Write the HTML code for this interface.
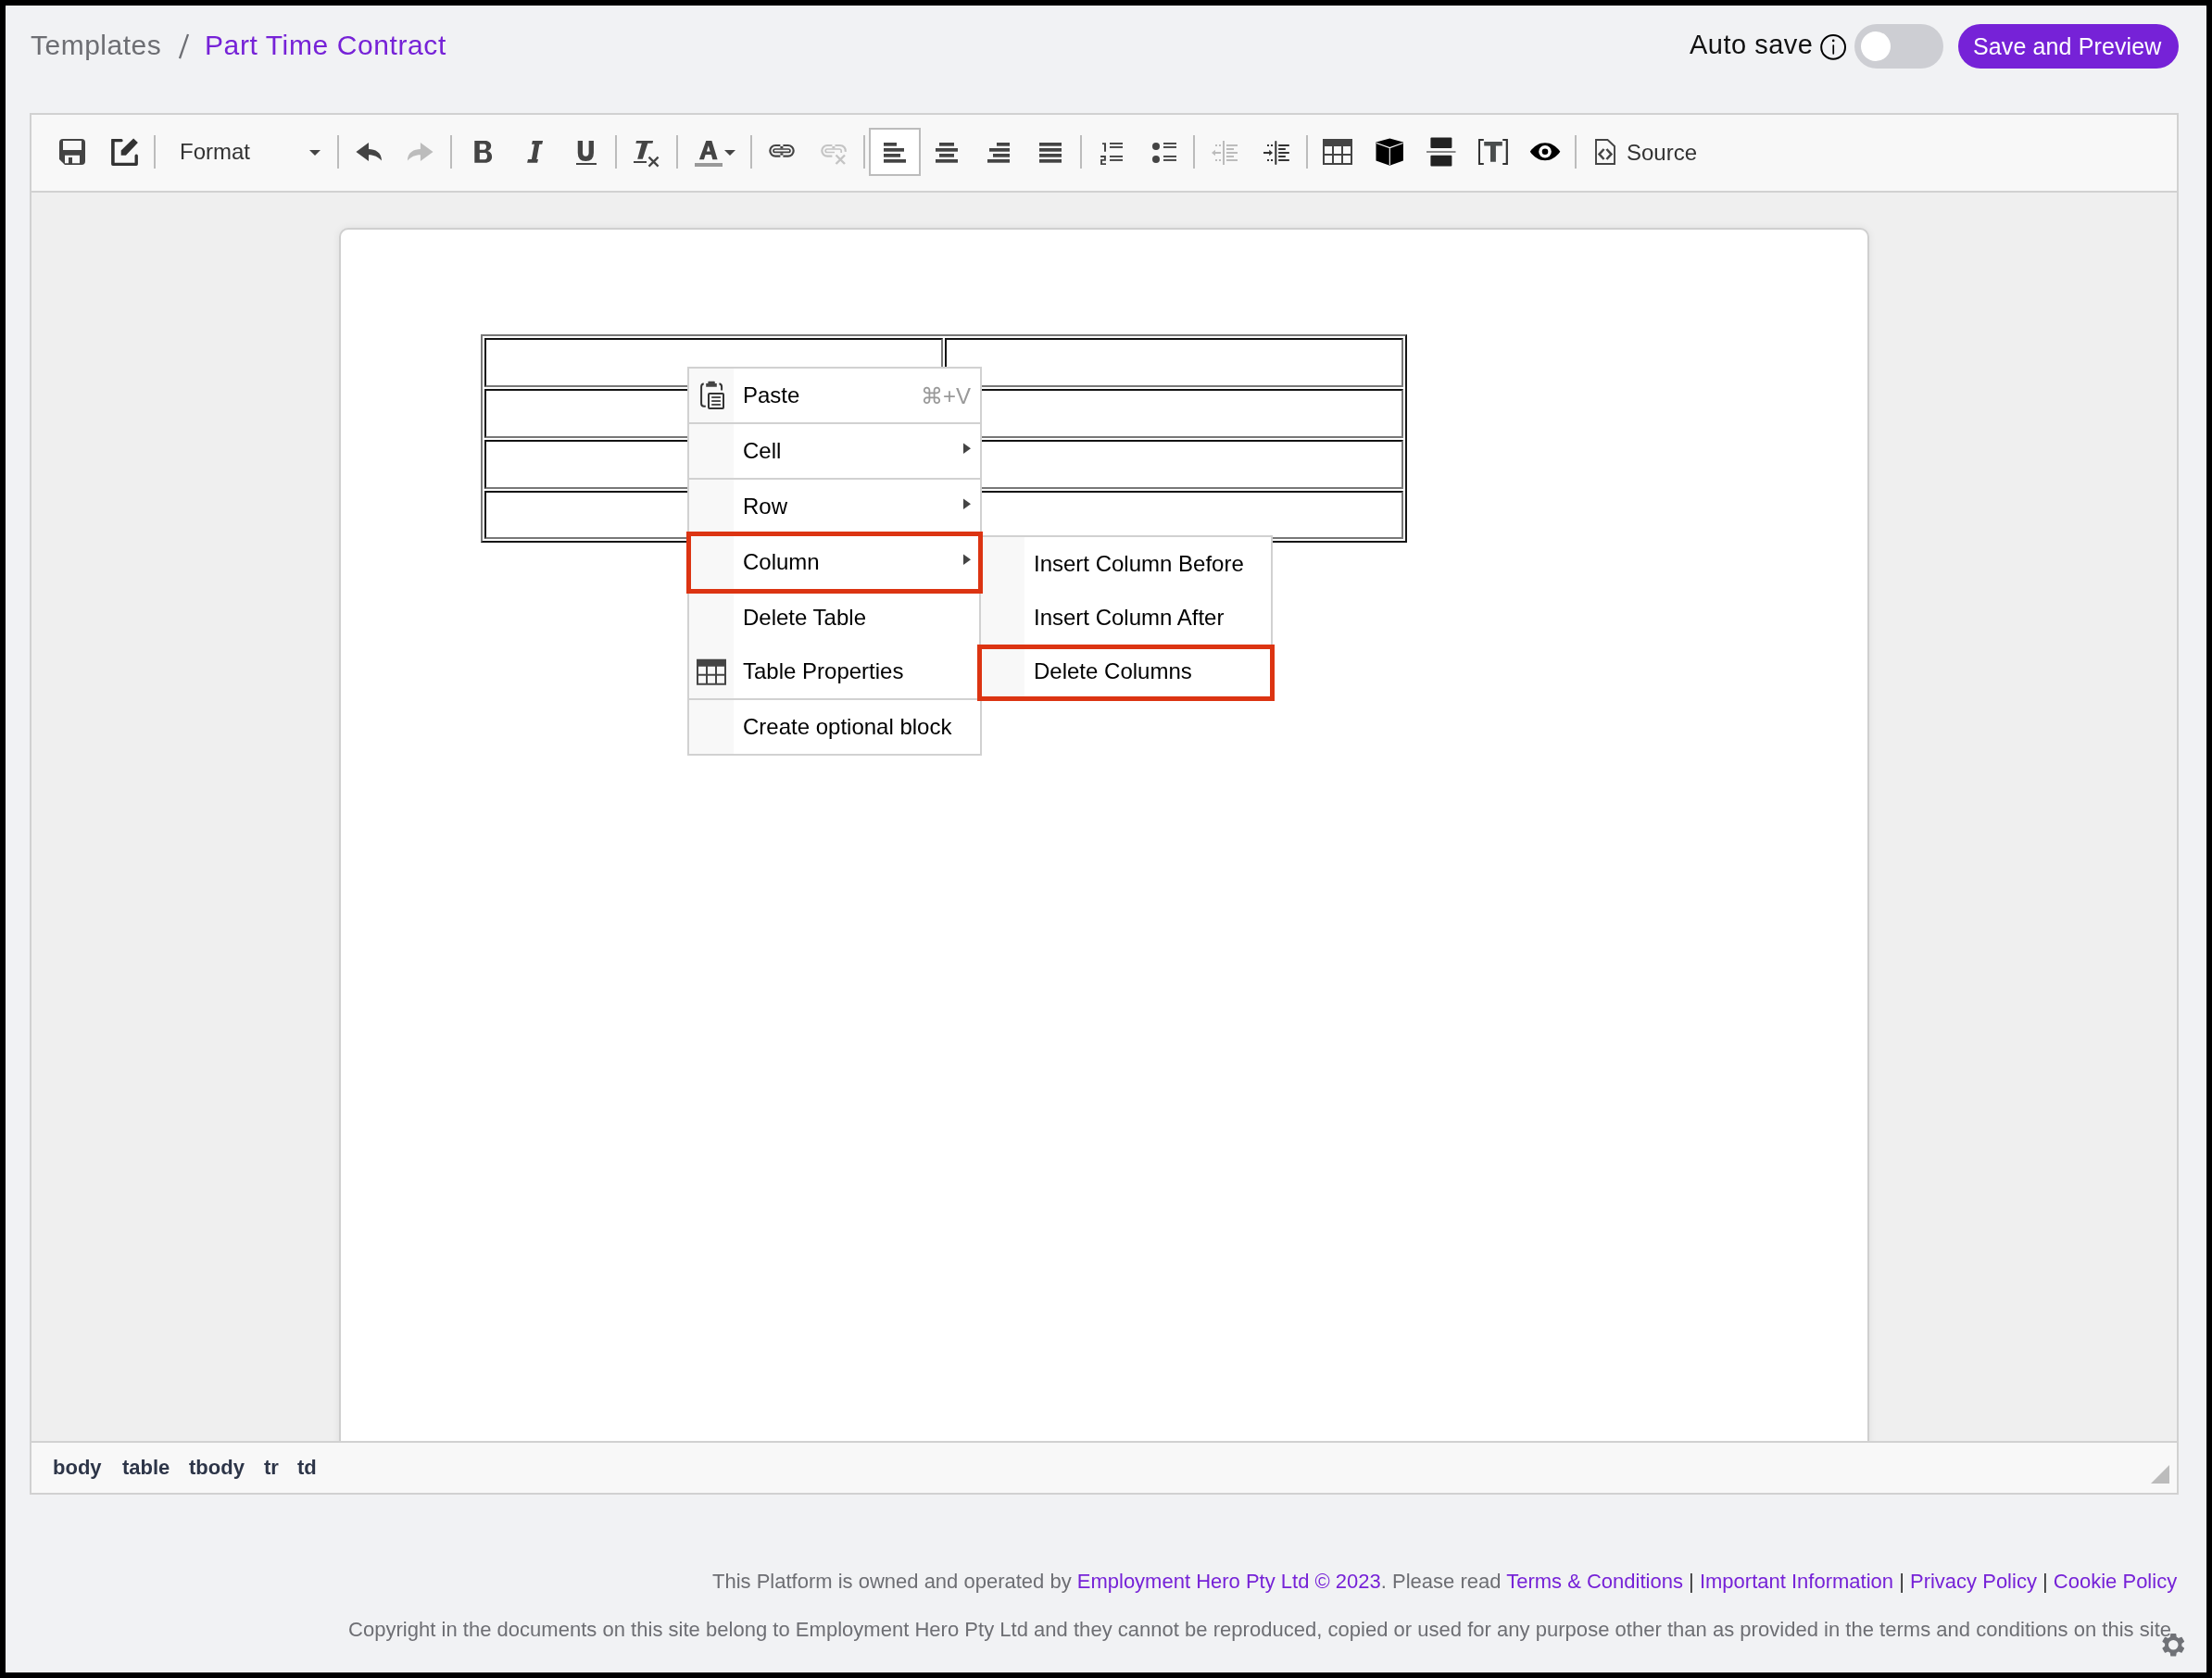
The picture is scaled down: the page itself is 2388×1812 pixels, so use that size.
<!DOCTYPE html>
<html><head><meta charset="utf-8">
<style>
*{margin:0;padding:0;box-sizing:border-box}
html,body{width:2388px;height:1812px;overflow:hidden;background:#000;font-family:"Liberation Sans",sans-serif;-webkit-font-smoothing:antialiased}
.a{position:absolute}
#win{position:absolute;left:6px;top:6px;width:2376px;height:1800px;background:#fff}
#bg{position:absolute;left:7px;top:7px;width:2374px;height:1798px;background:#f1f2f4;overflow:hidden}
.t{position:absolute;white-space:nowrap;line-height:1;will-change:transform}
.cell{border:2px solid;border-color:#121212 #787878 #787878 #121212}
.sep{height:2px;background:#d1d1d1}
.mi{font-size:24px;color:#000}
.ep{font-size:22px;font-weight:bold;color:#2d3548}
.pu{color:#7622d7}
.bar{color:#333}
</style></head><body>
<div id="win"></div>
<div id="bg"></div>

<!-- header -->
<div class="t" id="crumb1" style="left:33px;top:34px;font-size:30px;letter-spacing:0.5px;color:#6d6e73">Templates</div>
<svg class="a" style="left:185px;top:30px" width="30" height="40" viewBox="185 30 30 40"><path d="M194,63.2 L203,37" stroke="#6d6e73" stroke-width="2.3"/></svg>
<div class="t" id="crumb2" style="left:220.5px;top:34px;font-size:30px;letter-spacing:0.6px;color:#7622d7">Part Time Contract</div>

<div class="t" id="autosave" style="left:1824px;top:34px;font-size:29px;letter-spacing:0.5px;color:#111">Auto save</div>
<svg class="a" style="left:1960px;top:32px" width="40" height="40" viewBox="1960 32 40 40"><circle cx="1979.1" cy="50.9" r="12.9" fill="none" stroke="#000" stroke-width="2"/><circle cx="1979.2" cy="43.9" r="1.3" fill="#000"/><rect x="1978.4" y="48.2" width="1.7" height="10.5" rx=".8" fill="#000"/></svg>
<div class="a" style="left:2002px;top:26px;width:96px;height:48px;border-radius:24px;background:#cdced3"></div>
<div class="a" style="left:2009px;top:34px;width:32px;height:32px;border-radius:50%;background:#fff"></div>
<div class="a" style="left:2114px;top:26px;width:238px;height:48px;border-radius:24px;background:#7622d7"></div>
<div class="t" id="savebtn" style="left:2129.5px;top:38px;letter-spacing:0.12px;font-size:25px;color:#fff">Save and Preview</div>

<!-- editor -->
<div class="a" id="editor" style="left:32px;top:122px;width:2320px;height:1492px;border:2px solid #d1d1d1;background:#eeeeee"></div>
<div class="a" id="toolbar" style="left:34px;top:124px;width:2316px;height:84px;background:#f8f8f8;border-bottom:2px solid #d1d1d1"></div>
<div class="a" id="pathbar" style="left:34px;top:1556px;width:2316px;height:56px;background:#f8f8f8;border-top:2px solid #d1d1d1"></div>


<!-- toolbar icons -->
<svg class="a" style="left:0;top:0" width="2388" height="210" viewBox="0 0 2388 210">
<g fill="#bcbcbc">
<rect x="166" y="146" width="2" height="36"/>
<rect x="364" y="146" width="2" height="36"/>
<rect x="486" y="146" width="2" height="36"/>
<rect x="664" y="146" width="2" height="36"/>
<rect x="730" y="146" width="2" height="36"/>
<rect x="810" y="146" width="2" height="36"/>
<rect x="932" y="146" width="2" height="36"/>
<rect x="1166" y="146" width="2" height="36"/>
<rect x="1288" y="146" width="2" height="36"/>
<rect x="1410" y="146" width="2" height="36"/>
<rect x="1700" y="146" width="2" height="36"/>
</g>
<!-- active align-left button -->
<rect x="939" y="139" width="54" height="50" fill="#fff" stroke="#bcbcbc" stroke-width="2"/>
<g fill="#444">
<!-- save -->
<path fill-rule="evenodd" d="M68,150 H88 A4,4 0 0 1 92,154 V174 A4,4 0 0 1 88,178 H70 L64,172 V154 A4,4 0 0 1 68,150 Z M68,152 V162 H88 V152 Z M70,167.7 V176.2 H74 V170 H78 V176.2 H86 V167.7 Z"/>
<!-- edit -->
<g fill="#333"><path d="M120.5,150 H131 A1.6,1.6 0 0 1 131,153.3 H123.7 V175.7 H145.5 V168.2 A1.7,1.7 0 0 1 148.9,168.2 V177.3 A1.7,1.7 0 0 1 147.2,179 H121.8 A1.7,1.7 0 0 1 120.1,177.3 V151.6 A1.6,1.6 0 0 1 120.5,150 Z"/>
<path d="M130.7,162.6 L144.1,149.6 L148.9,154.1 L135.9,167.7 H130.7 Z"/>
</g>
<!-- dropdown arrow -->
<path d="M334,162 H346 L340,168 Z"/>
<!-- undo -->
<path d="M384.4,164 L398,154.1 V161 C405,161 412,164.5 412,173.6 C408,169.5 404,167.3 398,167.3 V173.9 Z"/>
<!-- B -->
<path fill-rule="evenodd" d="M512.3,152 H523.5 C528,152 530.2,154.6 530.2,157.6 C530.2,160.4 528.6,162.3 526.3,163.1 C529.4,163.8 531.1,166.3 531.1,169.3 C531.1,173.2 528.3,175.8 523.6,175.8 H512.3 Z M517.8,155.6 H522.4 C524.2,155.6 525,156.6 525,158.6 C525,160.6 524.1,161.7 522.4,161.7 H517.8 Z M517.8,164.9 H523.2 C525,164.9 526,166.1 526,168.5 C526,170.9 525,172.2 523.2,172.2 H517.8 Z"/>
<!-- I -->
<path d="M574.9,151.9 H586.1 L585.2,155.8 H582.3 L579.3,171.9 H581 L580.1,175.8 H569.1 L570,171.9 H573.9 L576.9,155.8 H574 Z"/>
<!-- U -->
<path d="M626.4,151.9 V165 C626.4,169.4 628.8,171.3 632.3,171.3 C635.8,171.3 638.3,169.4 638.3,165 V151.9" fill="none" stroke="#444" stroke-width="5.3"/>
<rect x="622" y="176" width="22" height="2"/>
<!-- Tx -->
<path d="M687,152 H705.1 L704.5,154.8 H699.3 L693.8,171.8 H688.2 L692.8,154.8 H686.4 Z"/>
<rect x="684" y="174" width="14" height="2"/>
<path d="M700.5,169.6 L710.6,179.6 M710.6,169.6 L700.5,179.6" stroke="#444" stroke-width="2.3"/>
<!-- A -->
<path fill-rule="evenodd" d="M754.9,172.2 L762.3,152 H768.4 L774.6,172.2 H769.3 L767.9,167 H761.6 L760,172.2 Z M762.9,163.5 H766.7 L764.8,157.3 Z"/>
<path d="M782,162 H794 L788,168 Z"/>
<rect x="750" y="176" width="30" height="4" fill="#999"/>
<!-- link -->
<g fill="none" stroke="#444" stroke-width="2.2">
<path d="M842.4,157 H837.2 A5.9,5.85 0 0 0 837.2,168.7 H842.4"/>
<path d="M845.4,157 H850.8 A5.9,5.85 0 0 1 850.8,168.7 H845.4"/>
<rect x="835.04" y="161" width="17.9" height="3.48" rx="1.74" stroke-width="1.74"/>
</g>
<rect x="842.4" y="158" width="3" height="2.3"/>
<rect x="842.4" y="165.3" width="3" height="2.3"/>
<!-- align -->
<rect x="954" y="154" width="14" height="3.7"/><rect x="954" y="160" width="22" height="3.7"/><rect x="954" y="166" width="18" height="3.7"/><rect x="954" y="172" width="24" height="3.7"/>
<rect x="1014" y="154" width="16" height="3.7"/><rect x="1010" y="160" width="24" height="3.7"/><rect x="1014" y="166" width="16" height="3.7"/><rect x="1010" y="172" width="24" height="3.7"/>
<rect x="1076" y="154" width="14" height="3.7"/><rect x="1068" y="160" width="22" height="3.7"/><rect x="1072" y="166" width="18" height="3.7"/><rect x="1066" y="172" width="24" height="3.7"/>
<rect x="1122" y="154" width="24" height="3.7"/><rect x="1122" y="160" width="24" height="3.7"/><rect x="1122" y="166" width="24" height="3.7"/><rect x="1122" y="172" width="24" height="3.7"/>
<!-- numbered list -->
<path d="M1190,154.3 H1194 V163.8 H1192 V156 H1190 Z"/>
<path d="M1188.1,168.1 H1193.9 V173.7 H1190 V176.2 H1194 V178 H1188.1 V172 H1192 V169.9 H1188.1 Z"/>
<rect x="1198" y="154" width="14" height="1.9"/><rect x="1198" y="158" width="14" height="1.9"/><rect x="1198" y="168" width="14" height="1.9"/><rect x="1198" y="172" width="14" height="1.9"/>
<!-- bullet list -->
<circle cx="1248" cy="158" r="4"/><circle cx="1248" cy="172" r="4"/>
<rect x="1256" y="154" width="14" height="1.9"/><rect x="1256" y="158" width="14" height="1.9"/><rect x="1256" y="168" width="14" height="1.9"/><rect x="1256" y="172" width="14" height="1.9"/>
</g>
<!-- unlink (gray) -->
<g fill="none" stroke="#c4c4c4" stroke-width="2.2">
<path d="M898.4,157 H893.2 A5.9,5.85 0 0 0 893.2,168.7 H898.4"/>
<path d="M901.5,157 H906.8 A5.9,5.85 0 0 1 912.7,163.9"/>
</g>
<g fill="none" stroke="#c4c4c4" stroke-width="1.74">
<path d="M901,164.5 H892.9 A1.74,1.74 0 0 1 892.9,161 H906.5 A1.74,1.74 0 0 1 908.2,162.7 V165"/>
</g>
<path d="M902.5,167.5 L912,177 M912,167.5 L902.5,177" stroke="#c4c4c4" stroke-width="2.4"/>
<rect x="898.4" y="158" width="3" height="2.3" fill="#c4c4c4"/>
<!-- redo (gray) -->
<path fill="#bcbcbc" d="M467.5,164 L453.9,154.1 V161 C446.9,161 439.9,164.5 439.9,173.6 C443.9,169.5 447.9,167.3 453.9,167.3 V173.9 Z"/>
<!-- outdent (gray) -->
<g fill="#bcbcbc">
<rect x="1320" y="152" width="2" height="26"/>
<rect x="1312" y="156" width="2" height="2"/><rect x="1316" y="156" width="2" height="2"/>
<rect x="1312" y="172" width="2" height="2"/><rect x="1316" y="172" width="2" height="2"/>
<rect x="1324" y="156" width="12" height="2"/><rect x="1324" y="160" width="8" height="2"/><rect x="1324" y="164" width="12" height="2"/><rect x="1324" y="168" width="8" height="2"/><rect x="1324" y="172" width="12" height="2"/>
<rect x="1310" y="164" width="8" height="2"/>
<path d="M1308,165 L1312,161.8 V168.2 Z"/>
</g>
<!-- indent -->
<g fill="#333">
<rect x="1376.3" y="152" width="2" height="26" rx="1"/>
<rect x="1368" y="156" width="2" height="2"/><rect x="1372" y="156" width="2" height="2"/>
<rect x="1368" y="172" width="2" height="2"/><rect x="1372" y="172" width="2" height="2"/>
<rect x="1380" y="156" width="12" height="2" rx=".8"/><rect x="1380" y="160" width="8" height="2" rx=".8"/><rect x="1380" y="164" width="12" height="2" rx=".8"/><rect x="1380" y="168" width="8" height="2" rx=".8"/><rect x="1380" y="172" width="12" height="2" rx=".8"/>
<rect x="1364" y="164" width="8" height="2"/>
<path d="M1374,165 L1370.2,161.8 V168.2 Z"/>
</g>
<!-- table -->
<path fill-rule="evenodd" fill="#444" d="M1428,150 H1460 V178 H1428 Z M1430,158 V166 H1438 V158 Z M1440,158 V166 H1448 V158 Z M1450,158 V166 H1458 V158 Z M1430,168 V176 H1438 V168 Z M1440,168 V176 H1448 V168 Z M1450,168 V176 H1458 V168 Z"/>
<!-- cube -->
<path fill="#000" d="M1500.3,149.4 L1514.9,153.6 V173.6 L1500.3,178.7 L1485.5,173.6 V153.6 Z"/>
<path d="M1486,154.4 L1500.3,159.6 L1514.5,154.4 M1500.3,159.6 V178.2" fill="none" stroke="#fff" stroke-width="1.1"/>
<!-- page break -->
<rect x="1544.4" y="148.5" width="23" height="11.6" rx="1" fill="#222"/>
<rect x="1540" y="163" width="31.5" height="2" fill="#888"/>
<rect x="1544.4" y="167.8" width="23" height="11.6" rx="1" fill="#222"/>
<!-- [T] -->
<g fill="#333">
<path d="M1596,150 H1601.8 V152 H1598 V176 H1601.8 V178 H1596 Z"/>
<path d="M1627.9,150 H1622.2 V152 H1625.7 V176 H1622.2 V178 H1627.9 Z"/>
</g>
<path fill="#4a4d4d" d="M1602.2,153 H1621.8 V157.6 H1614.9 V174.8 H1609 V157.6 H1602.2 Z"/>
<!-- eye -->
<path fill="#000" d="M1651.8,163.7 C1656,157.5 1662,154.2 1668,154.2 C1674,154.2 1680,157.5 1684.3,163.7 C1680,169.9 1674,173.2 1668,173.2 C1662,173.2 1656,169.9 1651.8,163.7 Z"/>
<circle cx="1668" cy="163.7" r="6.8" fill="#fff"/>
<circle cx="1668" cy="163.7" r="3.3" fill="#000"/>
<!-- source -->
<path fill="none" stroke="#444" stroke-width="1.9" d="M1723,151 H1735.5 L1743,158 V177 H1723 Z"/>
<path fill="none" stroke="#444" stroke-width="2.6" d="M1731.6,161 L1726.6,166.5 L1731.6,172 M1734.4,161 L1739.4,166.5 L1734.4,172"/>
</svg>
<div class="t" style="left:194px;top:151.5px;font-size:24px;color:#333">Format</div>
<div class="t" style="left:1756px;top:152.5px;font-size:24px;color:#333">Source</div>

<!-- page -->
<div class="a" id="content" style="left:34px;top:208px;width:2316px;height:1348px;overflow:hidden;background:#efefef">
<div class="a" id="page" style="left:332px;top:38px;width:1652px;height:1400px;background:#fff;border:2px solid #cfcfcf;border-radius:10px;box-shadow:0 0 9px rgba(0,0,0,.07)"></div>
</div>


<!-- table -->
<div class="a" style="left:519px;top:361px;width:1000px;height:225px;border:2px solid;border-color:#787878 #161616 #161616 #787878"></div>
<div class="a cell" style="left:523px;top:365px;width:495px;height:53px"></div>
<div class="a cell" style="left:1020px;top:365px;width:495px;height:53px"></div>
<div class="a cell" style="left:523px;top:420px;width:495px;height:53px"></div>
<div class="a cell" style="left:1020px;top:420px;width:495px;height:53px"></div>
<div class="a cell" style="left:523px;top:475px;width:495px;height:53px"></div>
<div class="a cell" style="left:1020px;top:475px;width:495px;height:53px"></div>
<div class="a cell" style="left:523px;top:530px;width:495px;height:52px"></div>
<div class="a cell" style="left:1020px;top:530px;width:495px;height:52px"></div>

<!-- context menu -->
<div class="a" style="left:742px;top:396px;width:318px;height:420px;border:2px solid #d1d1d1;background:#fff"></div>
<div class="a" style="left:744px;top:398px;width:48px;height:416px;background:#f8f8f8"></div>
<div class="a sep" style="left:744px;top:456px;width:314px"></div>
<div class="a sep" style="left:744px;top:516px;width:314px"></div>
<div class="a sep" style="left:744px;top:576px;width:314px"></div>
<div class="a sep" style="left:744px;top:636px;width:314px"></div>
<div class="a sep" style="left:744px;top:754px;width:314px"></div>
<div class="t mi" style="left:802px;top:415px">Paste</div>
<div class="t" style="left:994px;top:416px;font-size:24px;color:#999">&#8984;+V</div>
<div class="t mi" style="left:802px;top:475px">Cell</div>
<div class="t mi" style="left:802px;top:535px">Row</div>
<div class="t mi" style="left:802px;top:595px">Column</div>
<div class="t mi" style="left:802px;top:655px">Delete Table</div>
<div class="t mi" style="left:802px;top:713px">Table Properties</div>
<div class="t mi" style="left:802px;top:773px">Create optional block</div>

<!-- submenu -->
<div class="a" style="left:1057px;top:578px;width:317px;height:178px;border:2px solid #d1d1d1;background:#fff"></div>
<div class="a" style="left:1059px;top:580px;width:47px;height:174px;background:#f8f8f8"></div>
<div class="t mi" style="left:1116px;top:597px">Insert Column Before</div>
<div class="t mi" style="left:1116px;top:655px">Insert Column After</div>
<div class="t mi" style="left:1116px;top:713px">Delete Columns</div>

<svg class="a" style="left:0;top:0" width="2388" height="900" viewBox="0 0 2388 900">
<g fill="#444">
<path d="M1040,478.5 L1048,484.2 L1040,489.9 Z"/>
<path d="M1040,538.5 L1048,544.2 L1040,549.9 Z"/>
<path d="M1040,598.5 L1048,604.2 L1040,609.9 Z"/>
</g>
<!-- paste icon -->
<g fill="none" stroke="#333" stroke-width="2">
<path d="M759.7,414.3 A3.5,3.5 0 0 0 757.1,417.8 V435.8 A3,3 0 0 0 760.1,438.8 H761.8"/>
<path d="M776.5,414.3 A3.5,3.5 0 0 1 779.1,417.8 V421.5"/>
<rect x="765" y="425" width="16" height="16" rx="1"/>
</g>
<g fill="#333">
<path d="M762.2,414.1 H764.4 V412.6 A.8,.8 0 0 1 765.2,411.8 H771 A.8,.8 0 0 1 771.8,412.6 V414.1 H773.8 V417.7 H762.2 Z" fill="#444"/>
<rect x="768.2" y="428.2" width="9.7" height="1.7"/>
<rect x="768.2" y="432.2" width="9.7" height="1.7"/>
<rect x="768.2" y="436.1" width="9.7" height="1.7"/>
</g>
<!-- table properties icon -->
<path fill-rule="evenodd" fill="#444" d="M752,711.7 H784 V739.7 H752 Z M754,719.7 V727.7 H762 V719.7 Z M764,719.7 V727.7 H772 V719.7 Z M774,719.7 V727.7 H782 V719.7 Z M754,729.7 V737.7 H762 V729.7 Z M764,729.7 V737.7 H772 V729.7 Z M774,729.7 V737.7 H782 V729.7 Z"/>
</svg>

<!-- red highlight boxes -->
<div class="a" style="left:741px;top:574px;width:320px;height:67px;border:5px solid #dc3412"></div>
<div class="a" style="left:1055px;top:696px;width:321px;height:61px;border:5px solid #dc3412"></div>

<!-- elements path -->
<div class="t ep" style="left:57px;top:1574px">body</div>
<div class="t ep" style="left:131.5px;top:1574px">table</div>
<div class="t ep" style="left:204px;top:1574px">tbody</div>
<div class="t ep" style="left:285px;top:1574px">tr</div>
<div class="t ep" style="left:321px;top:1574px">td</div>
<svg class="a" style="left:2322px;top:1582px" width="20" height="20"><path d="M20,0 V20 H0 Z" fill="#bcbcbc"/></svg>

<!-- footer -->
<div class="t" id="foot1" style="right:38px;top:1697px;font-size:22px;color:#6d6e73">This Platform is owned and operated by <span class="pu">Employment Hero Pty Ltd &copy; 2023</span>. Please read <span class="pu">Terms &amp; Conditions</span> <span class="bar">|</span> <span class="pu">Important Information</span> <span class="bar">|</span> <span class="pu">Privacy Policy</span> <span class="bar">|</span> <span class="pu">Cookie Policy</span></div>
<div class="t" id="foot2" style="right:38px;letter-spacing:0.02px;top:1749px;font-size:22px;color:#6d6e73">Copyright in the documents on this site belong to Employment Hero Pty Ltd and they cannot be reproduced, copied or used for any purpose other than as provided in the terms and conditions on this site.</div>
<svg class="a" style="left:2330.75px;top:1760.75px" width="30.5" height="30.5" viewBox="0 0 24 24"><path fill-rule="evenodd" fill="#707277" d="M19.14,12.94c.04-.3.06-.61.06-.94 0-.32-.02-.64-.07-.94l2.03-1.58c.18-.14.23-.41.12-.61l-1.92-3.32c-.12-.22-.37-.29-.59-.22l-2.39.96c-.5-.38-1.03-.7-1.62-.94l-.36-2.54c-.04-.24-.24-.41-.48-.41h-3.84c-.24,0-.43.17-.47.41l-.36,2.54c-.59.24-1.13.57-1.62.94l-2.39-.96c-.22-.08-.47,0-.59.22L2.74,8.87c-.12.21-.08.47.12.61l2.03,1.58c-.05.3-.09.63-.09.94s.02.64.07.94l-2.03,1.58c-.18.14-.23.41-.12.61l1.92,3.32c.12.22.37.29.59.22l2.39-.96c.5.38,1.03.7,1.62.94l.36,2.54c.05.24.24.41.48.41h3.84c.24,0,.44-.17.47-.41l.36-2.54c.59-.24,1.13-.56,1.62-.94l2.39.96c.22.08.47,0,.59-.22l1.92-3.32c.12-.22.07-.47-.12-.61l-2.01-1.58zM12,16.15A4.15,4.15 0 1 1 12,7.85A4.15,4.15 0 1 1 12,16.15z"/></svg>

</body></html>
